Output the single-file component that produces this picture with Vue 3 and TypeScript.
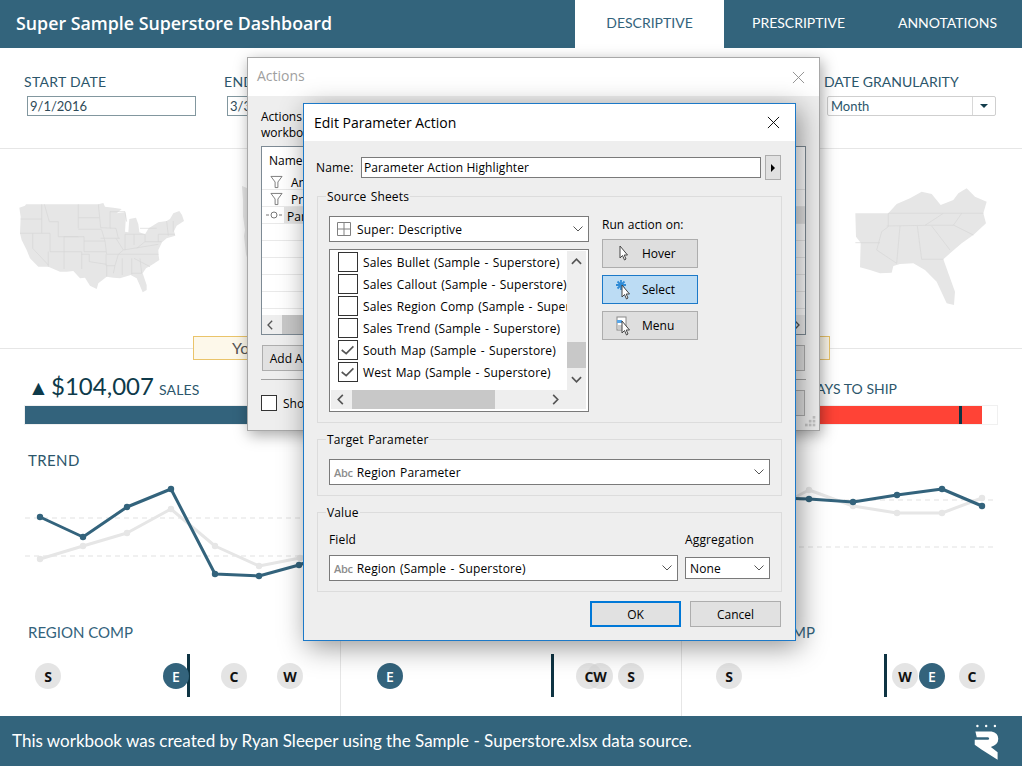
<template>
  <div class="page">
    <!-- Top bar -->
    <header class="top-bar">
      <h1 class="top-title">Super Sample Superstore Dashboard</h1>
      <nav class="tabs">
        <span v-for="tab in tabs" :key="tab" :class="['tab', { active: tab === 'DESCRIPTIVE' }]">{{ tab }}</span>
      </nav>
    </header>

    <!-- Filters -->
    <section class="filters">
      <div class="filter">
        <label class="filter-label spaced">START DATE</label>
        <div class="date-box">9/1/2016</div>
      </div>
      <div class="filter">
        <label class="filter-label spaced">END DATE</label>
        <div class="date-box">3/31/2017</div>
      </div>
      <div class="filter filter-last">
        <label class="filter-label">DATE GRANULARITY</label>
        <div class="gran-box">
          <span class="gran-val">Month</span>
          <span class="gran-arrow"><i class="gran-tri" /></span>
        </div>
      </div>
    </section>

    <!-- Maps -->
    <section class="maps">
      <svg class="map-us" viewBox="24 21 510 279">
        <path class="land" :d="usOutline" />
        <path class="borders" :d="usLines" />
      </svg>
      <svg class="map-west" viewBox="0 0 20 78">
        <path class="land" d="M0 0 L5 2 L7 0 L20 0 L20 78 L7 78 L4 68 L2 50 L3 44 L1 30 L1 14 Z" />
      </svg>
      <svg class="map-south" viewBox="885 408 405 372">
        <path class="land" :d="southOutline" />
        <path class="borders" :d="southLines" />
      </svg>
    </section>

    <!-- KPI bars -->
    <section class="kpis">
      <div class="kpi">
        <div class="kpi-head">
          <span class="kpi-tri">▲</span>
          <span class="kpi-num">$104,007</span>
          <span class="kpi-name">SALES</span>
        </div>
        <div class="kpi-track"><div class="kpi-fill" style="width: 100%" /></div>
      </div>
      <div class="kpi">
        <div class="kpi-head" />
        <div class="kpi-track"><div class="kpi-fill" style="width: 100%" /></div>
      </div>
      <div class="kpi">
        <div class="kpi-head kpi-head-right">
          <span class="kpi-name">DAYS TO SHIP</span>
        </div>
        <div class="kpi-track">
          <div class="kpi-fill kpi-red" :style="{ width: shipPct + '%' }" />
          <div class="kpi-tick" :style="{ left: shipTick + '%' }" />
        </div>
      </div>
    </section>

    <!-- Trend -->
    <section class="trend">
      <h2 class="sec-label trend-label">TREND</h2>
      <svg class="trend-chart" viewBox="0 476 1022 144">
        <line v-for="y in [518, 556]" :key="'l' + y" x1="25" x2="320" :y1="y" :y2="y" class="dash" />
        <line v-for="y in [500, 547]" :key="'r' + y" x1="790" x2="997" :y1="y" :y2="y" class="dash" />
        <template v-for="(s, i) in series" :key="i">
          <polyline :points="pts(s.points)" :class="['trend-line', s.cls]" />
          <circle v-for="p in s.points" :key="p[0]" :cx="p[0]" :cy="p[1]" r="3.2" :class="s.cls + '-dot'" />
        </template>
      </svg>
    </section>

    <!-- Region comparison -->
    <section class="comp">
      <div v-for="col in comps" :key="col.start" class="comp-col">
        <h2 class="sec-label">REGION COMP</h2>
        <div class="comp-track">
          <span class="comp-tick" :style="{ left: col.tick - col.start - 1 + 'px' }" />
          <span
            v-for="d in col.dots"
            :key="d.k"
            :class="['dot', { hi: d.k === 'E' }]"
            :style="{ left: d.x - col.start - 13 + 'px' }"
          ><b class="dot-letter">{{ d.k }}</b></span>
        </div>
      </div>
    </section>

    <footer class="foot">
      <span class="foot-text">This workbook was created by Ryan Sleeper using the Sample - Superstore.xlsx data source.</span>
      <svg class="foot-logo" viewBox="1305 365 80 110">
        <circle cx="1318" cy="374" r="3.6" />
        <circle cx="1344" cy="374" r="3.6" />
        <circle cx="1370" cy="374" r="3.6" />
        <path d="M1312 390 L1360 390 Q1380 394 1380 412 Q1380 430 1358 436 L1378 452 L1378 474 L1330 444 L1310 430 L1310 415 L1350 415 Q1356 411 1350 407 L1316 407 Z" />
      </svg>
    </footer>

    <!-- Notice behind the dialogs -->
    <div class="notice">You</div>

    <!-- Actions window (inactive) -->
    <div class="win-actions">
      <div class="act-title">
        <span>Actions</span>
        <svg class="act-close" viewBox="0 0 14 14"><path d="M1 1 L13 13 M13 1 L1 13" /></svg>
      </div>
      <div class="act-body">
        <p class="act-intro">Actions<br />workbook:</p>
        <div class="act-list">
          <div class="act-head">Name</div>
          <div v-for="(r, i) in actionRows" :key="i" class="act-row">
            <span class="act-icon">
              <svg v-if="r.icon === 'filter'" class="funnel" viewBox="0 0 14 14"><path d="M1 1 H13 L8.5 7 V13 H5.5 V7 Z" /></svg>
              <svg v-else-if="r.icon === 'param'" class="param" viewBox="0 0 16 8"><path d="M0 4 H3 M13 4 H16" /><circle cx="8" cy="4" r="3" /></svg>
            </span>
            <span :class="['act-name', { sel: r.icon === 'param' }, { narrow: r.icon === 'filter' }]">{{ r.name }}</span>
          </div>
          <div class="act-scroll">
            <svg class="chev" viewBox="0 0 8 12"><path d="M6 1 L1 6 L6 11" /></svg>
            <span class="act-thumb" />
            <svg class="chev chev-end" viewBox="0 0 8 12"><path d="M2 1 L7 6 L2 11" /></svg>
          </div>
        </div>
        <div class="act-btns">
          <button class="win-btn act-btn">Add Action &gt;</button>
          <button class="win-btn act-btn">Remove</button>
        </div>
        <div class="act-sep" />
        <div class="act-foot">
          <span class="check-box small" />
          <span class="act-show">Show actions for all sheets in this workbook</span>
          <button class="win-btn act-btn act-cancel">Cancel</button>
        </div>
      </div>
      <svg class="grip" viewBox="0 0 10 10">
        <rect v-for="g in gripDots" :key="g[0] + '-' + g[1]" :x="g[0]" :y="g[1]" width="2.4" height="2.4" />
      </svg>
    </div>

    <!-- Edit Parameter Action window -->
    <div class="win-edit">
      <div class="edit-title">
        <span>Edit Parameter Action</span>
        <svg class="edit-close" viewBox="0 0 14 14"><path d="M1 1 L13 13 M13 1 L1 13" /></svg>
      </div>
      <div class="edit-body">
        <div class="name-row">
          <label class="name-label">Name:</label>
          <div class="name-input">Parameter Action Highlighter</div>
          <button class="name-arrow"><i class="tri-right" /></button>
        </div>

        <div class="group group-source">
          <span class="group-title">Source Sheets</span>
          <div class="source-cols">
            <div class="source-left">
              <div class="combo">
                <svg class="sheet-ico" viewBox="0 0 14 14"><path d="M.5 .5 H13.5 V13.5 H.5 Z M7 .5 V13.5 M.5 7 H13.5" /></svg>
                <span class="combo-text">Super: Descriptive</span>
                <svg class="combo-chev" viewBox="0 0 10 6"><path d="M.5 .5 L5 5 L9.5 .5" /></svg>
              </div>
              <div class="sheet-list">
                <div class="sheet-rows">
                  <div v-for="sh in sheets" :key="sh.name" class="sheet-row">
                    <span class="check-box">
                      <svg v-if="sh.on" viewBox="0 0 20 20" class="tick"><path d="M3 10 L8 14 L16 6" /></svg>
                    </span>
                    <span class="sheet-name">{{ sh.name }}</span>
                  </div>
                </div>
                <div class="vbar">
                  <svg class="chev-v" viewBox="0 0 12 8"><path d="M1 6 L6 1 L11 6" /></svg>
                  <span class="vthumb" />
                  <svg class="chev-v" viewBox="0 0 12 8"><path d="M1 2 L6 7 L11 2" /></svg>
                </div>
                <div class="hbar">
                  <svg class="chev-h" viewBox="0 0 8 12"><path d="M6 1 L1 6 L6 11" /></svg>
                  <span class="hthumb" />
                  <svg class="chev-h chev-right" viewBox="0 0 8 12"><path d="M2 1 L7 6 L2 11" /></svg>
                </div>
              </div>
            </div>
            <div class="source-right">
              <div class="run-label">Run action on:</div>
              <button v-for="b in runButtons" :key="b" :class="['run-btn', { on: b === 'Select' }]">
                <svg class="run-ico" viewBox="0 0 18 20">
                  <g v-if="b === 'Select'" class="spark">
                    <path d="M5 0 V10 M0 5 H10 M1.5 1.5 L8.5 8.5 M8.5 1.5 L1.5 8.5" />
                  </g>
                  <g v-if="b === 'Menu'">
                    <rect class="menu-doc" x="1" y="1" width="9" height="13" />
                    <rect class="menu-sel" x="1" y="4" width="5" height="3" />
                    <path class="menu-line" d="M2 10 H8 M2 12 H8" />
                  </g>
                  <path
                    :class="['arrow', { 'arrow-hover': b === 'Hover' }]"
                    d="M6 5 V17 L8.5 14.5 L10.5 19 L12 18 L10.2 14 L13.5 14 Z"
                  />
                </svg>
                <span class="run-text">{{ b }}</span>
              </button>
            </div>
          </div>
        </div>

        <div class="group group-target">
          <span class="group-title">Target Parameter</span>
          <div class="combo combo-abc">
            <span class="abc">Abc</span>
            <span class="combo-text">Region Parameter</span>
            <svg class="combo-chev" viewBox="0 0 10 6"><path d="M.5 .5 L5 5 L9.5 .5" /></svg>
          </div>
        </div>

        <div class="group group-value">
          <span class="group-title">Value</span>
          <div class="value-cols">
            <div class="value-field">
              <div class="value-label">Field</div>
              <div class="combo combo-abc">
                <span class="abc">Abc</span>
                <span class="combo-text">Region (Sample - Superstore)</span>
                <svg class="combo-chev" viewBox="0 0 10 6"><path d="M.5 .5 L5 5 L9.5 .5" /></svg>
              </div>
            </div>
            <div class="value-agg">
              <div class="value-label">Aggregation</div>
              <div class="combo combo-small">
                <span class="combo-text">None</span>
                <svg class="combo-chev" viewBox="0 0 10 6"><path d="M.5 .5 L5 5 L9.5 .5" /></svg>
              </div>
            </div>
          </div>
        </div>

        <div class="edit-foot">
          <button class="win-btn edit-ok">OK</button>
          <button class="win-btn edit-cancel">Cancel</button>
        </div>
      </div>
    </div>
  </div>
</template>

<script setup lang="ts">
type Pt = [number, number]

const tabs = ['DESCRIPTIVE', 'PRESCRIPTIVE', 'ANNOTATIONS']

const shipPct = ((982 - 707) / 290) * 100
const shipTick = ((959 - 707) / 290) * 100

const series: { cls: string; points: Pt[] }[] = [
  {
    cls: 'grey',
    points: [[40, 559], [83, 546], [127, 533], [171, 509], [215, 546], [259, 566], [300, 558], [340, 540]],
  },
  {
    cls: 'blue',
    points: [[40, 517], [83, 537], [127, 507], [171, 489], [215, 574], [259, 576], [299, 565], [340, 550]],
  },
  {
    cls: 'grey',
    points: [[780, 505], [809, 490], [853, 506], [897, 513], [942, 513], [982, 498]],
  },
  {
    cls: 'blue',
    points: [[780, 498], [809, 499], [853, 502], [897, 495], [942, 489], [982, 506]],
  },
]

const pts = (list: Pt[]) => list.map((p) => p.join(',')).join(' ')

const comps = [
  {
    start: 0,
    tick: 188,
    dots: [{ k: 'S', x: 48 }, { k: 'E', x: 176 }, { k: 'C', x: 234 }, { k: 'W', x: 290 }],
  },
  {
    start: 341,
    tick: 552,
    dots: [{ k: 'E', x: 390 }, { k: 'C', x: 589 }, { k: 'W', x: 600 }, { k: 'S', x: 631 }],
  },
  {
    start: 682,
    tick: 885,
    dots: [{ k: 'S', x: 729 }, { k: 'W', x: 905 }, { k: 'E', x: 932 }, { k: 'C', x: 972 }],
  },
]

const actionRows = [
  { icon: 'filter', name: 'Annotations' },
  { icon: 'filter', name: 'Prescriptive' },
  { icon: 'param', name: 'Parameter Action Highlighter' },
  { icon: '', name: '' },
  { icon: '', name: '' },
  { icon: '', name: '' },
  { icon: '', name: '' },
  { icon: '', name: '' },
]

const gripDots: Pt[] = [[7, 0], [3.5, 3.5], [7, 3.5], [0, 7], [3.5, 7], [7, 7]]

const sheets = [
  { name: 'Sales Bullet (Sample - Superstore)', on: false },
  { name: 'Sales Callout (Sample - Superstore)', on: false },
  { name: 'Sales Region Comp (Sample - Superstore)', on: false },
  { name: 'Sales Trend (Sample - Superstore)', on: false },
  { name: 'South Map (Sample - Superstore)', on: true },
  { name: 'West Map (Sample - Superstore)', on: true },
]

const runButtons = ['Hover', 'Select', 'Menu']

// map shapes, traced by eye
const usOutline =
  'M28 38 L45 32 L48 28 L265 28 L280 24 L285 35 L310 38 L335 42 L320 55 L345 52 L348 62 L345 110 L355 112 L358 72 L378 68 L385 88 L388 112 L405 118 L416 100 L445 82 L470 78 L480 72 L490 55 L508 48 L516 60 L522 78 L500 92 L492 108 L496 122 L470 130 L456 142 L445 165 L446 182 L448 195 L425 210 L408 220 L398 235 L410 270 L410 285 L398 292 L388 268 L380 250 L362 240 L330 250 L310 248 L290 245 L265 265 L260 282 L240 272 L225 248 L210 250 L190 228 L170 230 L150 230 L115 215 L85 215 L60 190 L50 165 L35 135 L30 115 L32 65 Z'
const usLines =
  'M32 72 H95 M30 115 H120 M95 28 V115 M103 28 L118 80 H145 M205 28 V100 M145 80 V125 H205 M205 68 H268 M205 103 H275 M120 115 V170 M68 115 V160 L115 210 M120 170 H162 M162 125 H222 V170 M162 125 V222 M115 170 V215 M162 170 H215 V222 M222 138 H285 M222 170 H288 M215 178 H238 V200 L290 208 M265 28 L272 98 L318 100 L325 130 M275 105 L285 138 L290 178 H325 M272 130 H330 M288 178 V212 H315 M290 212 V245 M318 130 L340 165 L325 178 L315 212 L310 235 M345 118 V165 M372 118 V150 M345 118 H405 M325 178 H445 M340 165 L445 148 M337 190 V240 M365 190 V238 M390 190 L395 235 H365 M372 190 L420 215 M405 118 V140 L380 160 M405 140 H455 M445 118 V140 M470 78 L475 122 M490 78 V110 M445 118 H495 M300 50 H345 L350 80 M300 50 V100 M390 100 H440'
const southOutline =
  'M886 490 H985 L1010 462 L1050 445 L1085 425 L1115 432 L1142 465 L1180 450 L1195 430 L1220 415 L1245 440 L1280 455 L1270 490 L1278 520 L1240 555 L1205 580 L1170 610 L1150 628 L1165 670 L1185 725 L1182 765 L1160 760 L1130 695 L1095 660 L1060 640 L1020 642 L1000 648 L995 668 L960 670 L930 660 L900 652 L902 578 L888 560 Z'
const southLines =
  'M886 578 H960 M985 490 V530 L965 545 L950 600 L1010 640 M985 490 H1270 M980 528 L1095 526 L1150 490 M1095 526 H1180 L1205 490 M1020 528 L1010 640 M1072 528 L1085 628 H1150 M1115 528 L1170 600 M1180 525 L1240 555'
</script>

<style scoped>
.page {
  position: relative;
  width: 1022px;
  height: 766px;
  overflow: hidden;
  display: flex;
  flex-direction: column;
  background: #fff;
  font-family: Lato, "Open Sans", sans-serif;
  color: #33637c;
}

/* Top bar */
.top-bar {
  height: 48px;
  flex: none;
  display: flex;
  align-items: stretch;
  justify-content: space-between;
  background: #33647c;
}
.top-title {
  margin: 0 0 3px 16px;
  align-self: center;
  font-family: "Open Sans", sans-serif;
  font-size: 17.8px;
  font-weight: 600;
  color: #fff;
}
.tabs { display: flex; }
.tab {
  display: flex;
  align-items: center;
  justify-content: center;
  width: 149px;
  padding-bottom: 3px;
  font-size: 14px;
  color: #fff;
}
.tab.active { background: #fff; color: #33637c; }

/* Filters */
.filters {
  height: 101px;
  flex: none;
  box-sizing: border-box;
  display: flex;
  padding: 25px 26px 0 24px;
  border-bottom: 1px solid #e6e6e6;
}
.filter { width: 200px; }
.filter-last { width: 172px; margin-left: auto; }
.filter-label {
  display: block;
  height: 23px;
  line-height: 18px;
  font-size: 14px;
  color: #2c566b;
  white-space: nowrap;
}
.filter-label.spaced { letter-spacing: 0.3px; }
.date-box {
  box-sizing: border-box;
  width: 169px;
  height: 20px;
  margin-left: 3px;
  padding-left: 2px;
  border: 1px solid #82979f;
  font-size: 13px;
  line-height: 18px;
  color: #2f4a58;
}
.gran-box {
  box-sizing: border-box;
  display: flex;
  width: 169px;
  height: 20px;
  margin-left: 3px;
  border: 1px solid #cfcfcf;
  border-radius: 2px;
  font-size: 13px;
  line-height: 18px;
  color: #2c566b;
}
.gran-val { flex: 1; padding-left: 3px; }
.gran-arrow {
  width: 22px;
  display: flex;
  align-items: center;
  justify-content: center;
  border-left: 1px solid #d8d8d8;
}
.gran-tri {
  width: 0;
  height: 0;
  border-left: 4px solid transparent;
  border-right: 4px solid transparent;
  border-top: 4px solid #123c4c;
}

/* Maps */
.maps {
  height: 200px;
  flex: none;
  box-sizing: border-box;
  display: flex;
  align-items: flex-start;
  border-bottom: 1px solid #e6e6e6;
}
.land { fill: #e6e6e6; }
.borders { fill: none; stroke: #d6d6d6; stroke-width: 2; }
.map-us { width: 170px; height: 93px; margin: 53px 0 0 18px; }
.map-west { width: 20px; height: 78px; margin: 37px 0 0 54px; }
.map-south { width: 135px; height: 124px; margin: 37px 32px 0 auto; }

/* KPI bars */
.kpis {
  flex: none;
  display: grid;
  grid-template-columns: 340px 341px 341px;
}
.kpi { padding: 21px 25px 0; }
.kpi-head {
  box-sizing: border-box;
  height: 36px;
  display: flex;
  align-items: baseline;
}
.kpi-head-right { justify-content: flex-end; padding: 2px 100px 0 0; }
.kpi-tri {
  width: 21px;
  margin-left: 3px;
  font-size: 21px;
  line-height: 32px;
  color: #0e3a4a;
}
.kpi-num { margin: 0 5px 0 2px; font-size: 24px; line-height: 32px; color: #0e3a4a; }
.kpi-name { font-size: 14px; line-height: 32px; color: #2c566b; letter-spacing: 0.2px; }
.kpi-head-right .kpi-name { line-height: 34px; letter-spacing: 0; }
.kpi-track {
  position: relative;
  height: 18px;
  box-shadow: 0 0 0 1px #f0f0f0;
}
.kpi-fill { height: 100%; background: #33637c; }
.kpi-red { background: #ff4336; }
.kpi-tick {
  position: absolute;
  top: 0;
  bottom: 0;
  width: 3px;
  background: #0e3443;
}

/* Trend */
.trend { flex: none; padding-top: 28px; }
.sec-label {
  margin: 0;
  height: 16px;
  padding-left: 28px;
  font-size: 15px;
  font-weight: 400;
  line-height: 16px;
  white-space: nowrap;
}
.trend-label { color: #2c566b; letter-spacing: 0.4px; }
.trend-chart { display: block; width: 1022px; height: 144px; margin-top: 8px; }
.dash { stroke: #ececec; stroke-width: 1.5; stroke-dasharray: 5 4; }
.trend-line { fill: none; stroke-width: 3; stroke-linejoin: round; }
.trend-line.grey { stroke: #e6e6e6; }
.trend-line.blue { stroke: #33637c; }
.grey-dot { fill: #e6e6e6; }
.blue-dot { fill: #33637c; }

/* Region comparison */
.comp {
  flex: none;
  margin-top: 4px;
  display: grid;
  grid-template-columns: 340px 341px 341px;
}
.comp-col + .comp-col { border-left: 1px solid #e6e6e6; }
.comp-track { position: relative; height: 76px; }
.comp-tick {
  position: absolute;
  top: 14px;
  width: 3px;
  height: 43px;
  background: #0e3443;
}
.dot {
  position: absolute;
  top: 23px;
  width: 26px;
  height: 26px;
  display: flex;
  align-items: center;
  justify-content: center;
  font-family: "Open Sans", sans-serif;
  font-size: 14px;
  color: #111;
}
.dot::before {
  content: '';
  position: absolute;
  inset: 0;
  z-index: 0;
  border-radius: 50%;
  background: rgba(216, 216, 216, 0.7);
}
.dot-letter { position: relative; z-index: 1; font-weight: 700; }
.dot.hi { color: #fff; }
.dot.hi::before { background: #33637c; }
.dot.hi .dot-letter { font-weight: 600; }

/* Footer */
.foot {
  height: 50px;
  flex: none;
  display: flex;
  align-items: center;
  justify-content: space-between;
  padding: 0 22px 0 12px;
  background: #33647c;
  color: #fff;
}
.foot-text { font-size: 17px; padding-bottom: 2px; }
.foot-logo { width: 27px; height: 37px; fill: #fff; }

/* Notice */
.notice {
  position: absolute;
  left: 193px;
  top: 336px;
  box-sizing: border-box;
  width: 637px;
  height: 24px;
  padding-left: 38px;
  border: 1px solid #eac46a;
  background: #fdf8ea;
  font-size: 16px;
  line-height: 22px;
  color: #555;
}

/* Windows shared */
.win-btn {
  box-sizing: border-box;
  border: 1px solid #adadad;
  background: #e1e1e1;
  font-family: "Open Sans", sans-serif;
  font-size: 12px;
  color: #000;
  padding: 0;
}

/* Actions window */
.win-actions {
  position: absolute;
  left: 247px;
  top: 57px;
  box-sizing: border-box;
  width: 573px;
  height: 374px;
  border: 1px solid #a8a8a8;
  background: #eee;
  box-shadow: 2px 4px 14px rgba(0, 0, 0, 0.35);
  font-family: "Open Sans", sans-serif;
  font-size: 12px;
  color: #000;
}
.act-title {
  box-sizing: border-box;
  height: 38px;
  display: flex;
  align-items: center;
  justify-content: space-between;
  padding: 0 14px 3px 9px;
  background: #fff;
  font-size: 14px;
  color: #a0a0a0;
}
.act-close { width: 13px; height: 13px; margin-top: 3px; fill: none; stroke: #8c8c8c; }
.act-body { padding: 13px 13px 0; }
.act-intro { margin: 0; height: 37px; line-height: 16px; }
.act-list {
  box-sizing: border-box;
  height: 189px;
  width: 545px;
  overflow: hidden;
  border: 1px solid #7d8a94;
  background: #fff;
}
.act-head { height: 26px; padding-left: 7px; line-height: 28px; }
.act-row {
  display: flex;
  height: 17px;
  box-sizing: border-box;
  border-bottom: 1px solid #e9e9e9;
  line-height: 19px;
}
.act-icon { width: 22px; display: flex; align-items: center; justify-content: center; flex: none; }
.funnel { width: 13px; height: 14px; margin: 2px 0 0 6px; fill: none; stroke: #777; }
.param { width: 16px; height: 8px; margin-left: 2px; fill: none; stroke: #777; }
.act-name { flex: 1; padding-left: 3px; white-space: nowrap; overflow: hidden; }
.act-name.narrow { padding-left: 7px; }
.act-name.sel { background: #e4e4e4; }
.act-scroll {
  height: 20px;
  display: flex;
  align-items: center;
  background: #eee;
  margin-top: 6px;
  padding: 0 5px;
}
.chev { width: 7px; height: 10px; fill: none; stroke: #555; stroke-width: 1.6; }
.chev-end { margin-left: auto; }
.act-thumb { width: 300px; height: 20px; margin-left: 8px; background: #c8c8c8; }
.act-btns {
  display: flex;
  justify-content: space-between;
  margin-top: 10px;
  padding: 0 1px;
}
.act-btn { width: 86px; height: 26px; }
.act-sep { height: 1px; margin-top: 8px; background: #a0a0a0; }
.act-foot {
  display: flex;
  align-items: flex-start;
  margin-top: 10px;
  padding-right: 1px;
}
.act-foot .check-box.small { margin-top: 5px; }
.act-show { flex: 1; margin: 5px 0 0 6px; white-space: nowrap; overflow: hidden; }
.grip {
  position: absolute;
  right: 3px;
  bottom: 3px;
  width: 11px;
  height: 11px;
  fill: #c4c4c4;
}

/* Edit window */
.win-edit {
  position: absolute;
  left: 303px;
  top: 103px;
  box-sizing: border-box;
  width: 493px;
  height: 538px;
  border: 1px solid #1c79c8;
  background: #eee;
  box-shadow: 4px 6px 26px rgba(0, 0, 0, 0.42);
  font-family: "Open Sans", sans-serif;
  font-size: 12px;
  color: #000;
}
.edit-title {
  height: 37px;
  display: flex;
  align-items: center;
  justify-content: space-between;
  padding: 0 15px 0 10px;
  background: #fff;
  font-size: 14px;
}
.edit-close { width: 13px; height: 13px; fill: none; stroke: #000; }
.edit-body {
  padding: 14px 13px 0;
  letter-spacing: 0.15px;
  word-spacing: 1px;
}
.name-row { display: flex; align-items: center; height: 25px; }
.name-label { width: 45px; margin-left: -1px; }
.name-input {
  box-sizing: border-box;
  flex: 1;
  height: 21px;
  padding-left: 2px;
  border: 1px solid #7a7a7a;
  background: #fff;
  line-height: 19px;
  letter-spacing: 0.1px;
  word-spacing: 0;
}
.name-arrow {
  box-sizing: border-box;
  width: 16px;
  height: 25px;
  margin: 0 1px 0 4px;
  padding: 0;
  display: flex;
  align-items: center;
  justify-content: center;
  border: 1px solid #adadad;
  background: #e1e1e1;
}
.tri-right {
  width: 0;
  height: 0;
  border-top: 4px solid transparent;
  border-bottom: 4px solid transparent;
  border-left: 4px solid #000;
}

.group {
  position: relative;
  box-sizing: border-box;
  margin-top: 16px;
  padding: 19px 11px 0;
  border: 1px solid #dcdcdc;
}
.group-title {
  position: absolute;
  left: 8px;
  top: -8px;
  padding: 0 1px;
  background: #eee;
  line-height: 16px;
}
.group-source { height: 227px; }
.group-target { height: 57px; }
.group-value { height: 80px; }

.source-cols { display: flex; gap: 13px; }
.source-left { width: 260px; flex: none; }
.source-right { width: 96px; flex: none; }

.combo {
  box-sizing: border-box;
  display: flex;
  align-items: center;
  height: 26px;
  padding: 0 5px 0 7px;
  border: 1px solid #7a7a7a;
  background: #fff;
}
.combo-abc { padding-left: 4px; }
.combo-small { height: 22px; margin-top: 2px; padding-left: 4px; }
.combo-text { flex: 1; white-space: nowrap; }
.combo-chev { width: 10px; height: 6px; fill: none; stroke: #555; flex: none; }
.sheet-ico { width: 14px; height: 14px; margin-right: 6px; fill: none; stroke: #808080; flex: none; }
.abc {
  margin-right: 4px;
  font-size: 11px;
  font-weight: 600;
  letter-spacing: -0.3px;
  color: #8c8c8c;
}

.sheet-list {
  box-sizing: border-box;
  height: 163px;
  margin-top: 7px;
  padding: 1px 2px 2px 1px;
  display: grid;
  grid-template-columns: 236px 19px;
  grid-template-rows: 139px 19px;
  border: 1px solid #7a7a7a;
  background: #fff;
}
.sheet-rows { overflow: hidden; }
.sheet-row {
  display: flex;
  align-items: center;
  height: 22px;
  padding-left: 7px;
  white-space: nowrap;
}
.check-box {
  box-sizing: border-box;
  display: inline-block;
  width: 20px;
  height: 20px;
  flex: none;
  border: 1px solid #333;
  background: #fff;
}
.check-box.small { width: 16px; height: 16px; }
.tick { display: block; width: 18px; height: 18px; fill: none; stroke: #555; stroke-width: 1.8; }
.sheet-name { margin-left: 5px; }
.vbar {
  display: flex;
  flex-direction: column;
  background: #eee;
}
.chev-v {
  width: 11px;
  height: 8px;
  margin: 7px 4px;
  flex: none;
  fill: none;
  stroke: #555;
  stroke-width: 1.8;
}
.vthumb { height: 26px; margin-top: auto; background: #c8c8c8; flex: none; }
.hbar {
  grid-column: 1 / span 2;
  display: flex;
  align-items: center;
  background: #eee;
}
.chev-h {
  width: 8px;
  height: 11px;
  margin: 0 7px 0 6px;
  flex: none;
  fill: none;
  stroke: #555;
  stroke-width: 1.8;
}
.chev-right { margin: 0 27px 0 auto; }
.hthumb { width: 143px; height: 19px; background: #c8c8c8; flex: none; }

.run-label { height: 23px; line-height: 18px; letter-spacing: 0; word-spacing: 0.5px; }
.run-btn {
  box-sizing: border-box;
  display: flex;
  align-items: center;
  width: 96px;
  height: 29px;
  margin-bottom: 7px;
  padding: 0 0 0 13px;
  border: 1px solid #adadad;
  background: #dedede;
  font-family: "Open Sans", sans-serif;
  font-size: 12px;
  color: #000;
}
.run-btn.on { border-color: #1c79c8; background: #bcdcf4; }
.run-ico { width: 18px; height: 20px; flex: none; overflow: visible; }
.run-text { margin-left: 8px; }
.arrow { fill: #fff; stroke: #444; stroke-width: 1; stroke-linejoin: round; }
.arrow-hover { transform: translate(-2px, -3px); }
.spark path { fill: none; stroke: #2f8bd6; stroke-width: 1.8; }
.menu-doc { fill: #fff; stroke: #888; }
.menu-sel { fill: #58a6e8; }
.menu-line { stroke: #999; }

.value-cols { display: flex; gap: 7px; }
.value-field { flex: 1; min-width: 0; }
.value-agg { width: 85px; flex: none; }
.value-label { height: 23px; line-height: 16px; }

.edit-foot {
  display: flex;
  justify-content: flex-end;
  gap: 9px;
  margin-top: 9px;
  padding-right: 1px;
}
.edit-ok, .edit-cancel { width: 91px; height: 26px; }
.edit-ok { border: 2px solid #0078d7; }
</style>

<style>
html, body { margin: 0; background: #fff; }
</style>
